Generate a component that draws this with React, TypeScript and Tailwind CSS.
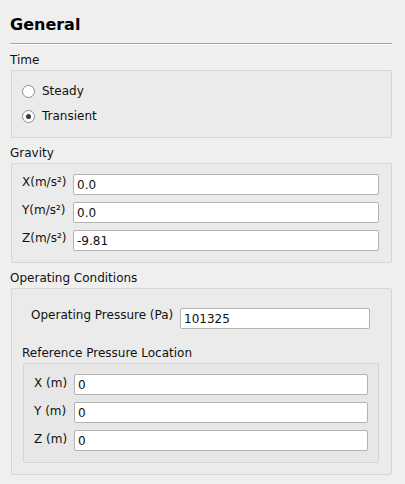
const gravity = [
  { label: "X(m/s²)", value: "0.0" },
  { label: "Y(m/s²)", value: "0.0" },
  { label: "Z(m/s²)", value: "-9.81" },
];

const refLocation = [
  { label: "X (m)", value: "0" },
  { label: "Y (m)", value: "0" },
  { label: "Z (m)", value: "0" },
];

function Radio({ label, checked }: { label: string; checked?: boolean }) {
  return (
    <div className="flex h-[20px] items-center gap-[7px]">
      <div className="flex h-[13px] w-[13px] items-center justify-center rounded-full border border-[#8e8e8e] bg-white">
        {checked && <div className="h-[5px] w-[5px] rounded-full bg-[#383838]" />}
      </div>
      <span className="leading-[14px]">{label}</span>
    </div>
  );
}

function Field({ value }: { value: string }) {
  return (
    <input
      readOnly
      defaultValue={value}
      className="h-[21px] w-full rounded-[2px] border border-[#b3b3b3] bg-white px-[3px] text-[12px] leading-[14px] text-[#111] outline-none"
    />
  );
}

function Section({ title, children }: { title: string; children: React.ReactNode }) {
  return (
    <div className="mt-[8px] flex flex-col">
      <div className="mb-[3px] h-[14px] leading-[14px]">{title}</div>
      <div className="ml-px rounded-[2px] border border-[#d6d6d6] bg-[#ebebeb]">{children}</div>
    </div>
  );
}

export default function App() {
  return (
    <div className="flex h-[484px] w-[405px] flex-col bg-[#efefef] pl-[10px] pr-[13px] font-['DejaVu_Sans',sans-serif] text-[12px] text-[#111]">
      {/* Header */}
      <div className="mt-[15px] h-[20px] text-[16px] font-bold leading-[20px] text-black">General</div>
      <div className="mt-[8px] border-t border-b border-t-[#a2a2a2] border-b-white" />

      <div className="mt-[0px]">
        <Section title="Time">
          <div className="flex flex-col gap-[5px] pb-[11px] pl-[10px] pt-[10px]">
            <Radio label="Steady" />
            <Radio label="Transient" checked />
          </div>
        </Section>
      </div>

      <Section title="Gravity">
        <div className="grid grid-cols-[44px_1fr] gap-x-[7px] gap-y-[7px] pb-[11px] pl-[10px] pr-[12px] pt-[10px]">
          {gravity.map((g) => (
            <div key={g.label} className="contents">
              <span className="whitespace-nowrap pt-[1px] leading-[14px]">{g.label}</span>
              <Field value={g.value} />
            </div>
          ))}
        </div>
      </Section>

      <Section title="Operating Conditions">
        <div className="flex flex-col pb-[11px] pl-[10px] pr-[12px] pt-[19px]">
          <div className="flex items-start gap-[8px] px-[9px]">
            <span className="w-[141px] shrink-0 whitespace-nowrap leading-[14px]">Operating Pressure (Pa)</span>
            <Field value="101325" />
          </div>
          <div className="mt-[17px] mb-[3px] h-[14px] leading-[14px]">Reference Pressure Location</div>
          <div className="ml-px rounded-[2px] border border-[#d4d4d4] bg-[#e7e7e7]">
            <div className="grid grid-cols-[33px_1fr] gap-x-[7px] gap-y-[7px] pb-[11px] pl-[10px] pr-[10px] pt-[10px]">
              {refLocation.map((r) => (
                <div key={r.label} className="contents">
                  <span className="whitespace-nowrap pt-[2px] leading-[14px]">{r.label}</span>
                  <Field value={r.value} />
                </div>
              ))}
            </div>
          </div>
        </div>
      </Section>
    </div>
  );
}
